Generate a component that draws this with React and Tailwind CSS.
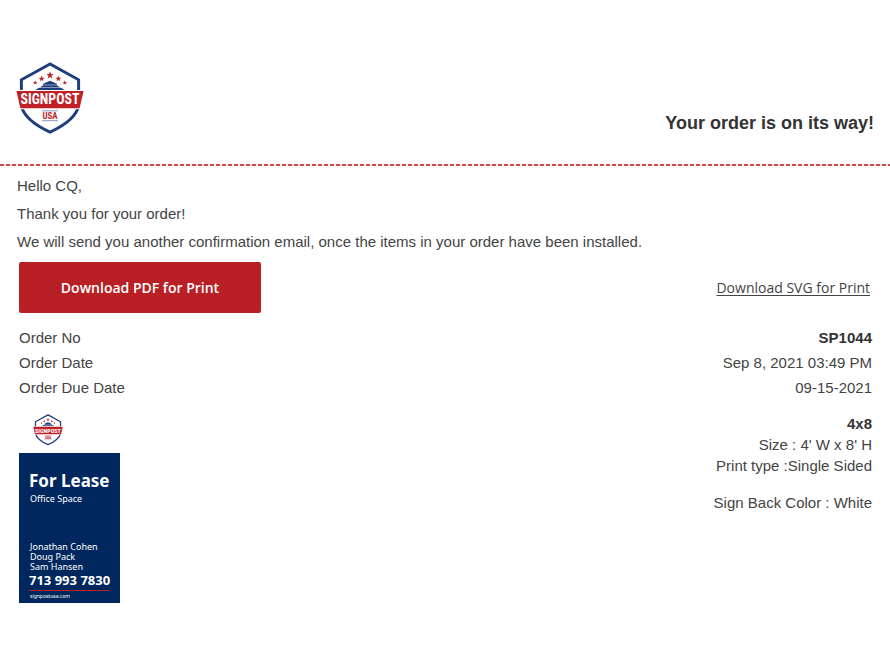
import React from "react";

const STAR = "M0 -4L1 -1.3L3.8 -1.2L1.5 0.5L2.4 3.2L0 1.6L-2.4 3.2L-1.5 0.5L-3.8 -1.2L-1 -1.3Z";

const orderRows = [
  { label: "Order No", value: "SP1044", bold: true },
  { label: "Order Date", value: "Sep 8, 2021 03:49 PM" },
  { label: "Order Due Date", value: "09-15-2021" },
];

function Logo({ className }) {
  return (
    <svg viewBox="0 0 68 74" className={className} role="img" aria-label="Signpost USA">
      <path
        d="M34 2L5 18V44C7 55 19 64 34 71C49 64 61 55 63 44V18Z"
        fill="#fff"
        stroke="#1f3d7a"
        strokeWidth="3"
      />
      <g fill="#c02127">
        <path d={STAR} transform="translate(34 13.500)" />
        <path d={STAR} transform="translate(25.500 17) scale(.8)" />
        <path d={STAR} transform="translate(42.500 17) scale(.8)" />
        <path d={STAR} transform="translate(19 21) scale(.6)" />
        <path d={STAR} transform="translate(49 21) scale(.6)" />
      </g>
      <path d="M34 19L41 22V23H27V22Z M27 23.500H41L44 25.500H24Z M23 26H45L49 28.500H19Z" fill="#1f3d7a" />
      <path d="M0 28.500H68L64 48H4Z" fill="#fff" />
      <path d="M0 29.500H68L64 47H4Z" fill="#c02127" />
      <text
        x="34"
        y="43"
        textAnchor="middle"
        fontFamily="'Roboto Condensed', Roboto, sans-serif"
        fontSize="14"
        fontWeight="700"
        fill="#fff"
      >
        SIGNPOST
      </text>
      <path d="M26 49.500H42M26 59.500H42" stroke="#8795b5" strokeWidth="1" />
      <text
        x="34"
        y="58"
        textAnchor="middle"
        fontFamily="'Roboto Condensed', Roboto, sans-serif"
        fontSize="9"
        fontWeight="700"
        fill="#c02127"
      >
        USA
      </text>
    </svg>
  );
}

function SignPreview() {
  return (
    <div className="w-[101px] font-['Noto_Sans','Open_Sans',sans-serif]">
      <div className="h-10 pl-3.5 pt-px">
        <Logo className="h-8 w-[30px]" />
      </div>
      <div className="h-[150px] bg-[#00285e] pl-2.5 pt-[15px] text-white whitespace-nowrap">
        <p className="text-[17px] leading-[25px] font-bold">For Lease</p>
        <p className="pl-px text-[9px] leading-3">Office Space</p>
        <div className="mt-[37px] pl-px text-[9px] leading-[10px]">
          <p>Jonathan Cohen</p>
          <p>Doug Pack</p>
          <p>Sam Hansen</p>
        </div>
        <p className="text-[13px] leading-4 font-bold">713 993 7830</p>
        <div className="mt-0.5 h-px w-20 bg-[#c02127]" />
        <p className="pl-px text-[5px] leading-[10px]">signpostusa.com</p>
      </div>
    </div>
  );
}

export default function App() {
  return (
    <div className="bg-white pt-[62px] pb-12 font-['Liberation_Sans',Arial,sans-serif] text-[15px] text-[#444]">
      {/* Header */}
      <header className="flex items-start justify-between px-4 pb-[27px]">
        <Logo className="h-[73px] w-[68px]" />
        <h1 className="mt-[47px] text-[18px] leading-7 font-bold text-[#333]">Your order is on its way!</h1>
      </header>
      <div className="h-0.5 bg-[repeating-linear-gradient(to_right,#cc4a53_0px,#cc4a53_4px,#fbeced_4px,#fbeced_6px)]" />

      {/* Greeting */}
      <div className="px-[17px] pt-1.5 leading-7">
        <p>Hello CQ,</p>
        <p>Thank you for your order!</p>
        <p>We will send you another confirmation email, once the items in your order have been installed.</p>
      </div>

      {/* Downloads */}
      <div className="mt-1.5 flex items-center justify-between pl-[19px] pr-5 font-['Open_Sans','Noto_Sans',sans-serif] text-[14px]">
        <button
          type="button"
          className="h-[51px] w-[242px] rounded-xs bg-[#b92025] font-semibold text-white cursor-pointer"
        >
          Download PDF for Print
        </button>
        <a href="#svg" className="underline underline-offset-2">
          Download SVG for Print
        </a>
      </div>

      {/* Order details */}
      <dl className="mt-3 pl-[19px] pr-[18px]">
        {orderRows.map((row) => (
          <div key={row.label} className="flex justify-between leading-[25px]">
            <dt>{row.label}</dt>
            <dd className={row.bold ? "font-bold text-[#333]" : ""}>{row.value}</dd>
          </div>
        ))}
      </dl>

      {/* Item */}
      <div className="mt-[13px] flex items-start justify-between pl-[19px] pr-[18px]">
        <SignPreview />
        <div className="text-right leading-[21px]">
          <p className="font-bold text-[#333]">4x8</p>
          <p>Size : 4' W x 8' H</p>
          <p>Print type :Single Sided</p>
          <p className="mt-4">Sign Back Color : White</p>
        </div>
      </div>
    </div>
  );
}
